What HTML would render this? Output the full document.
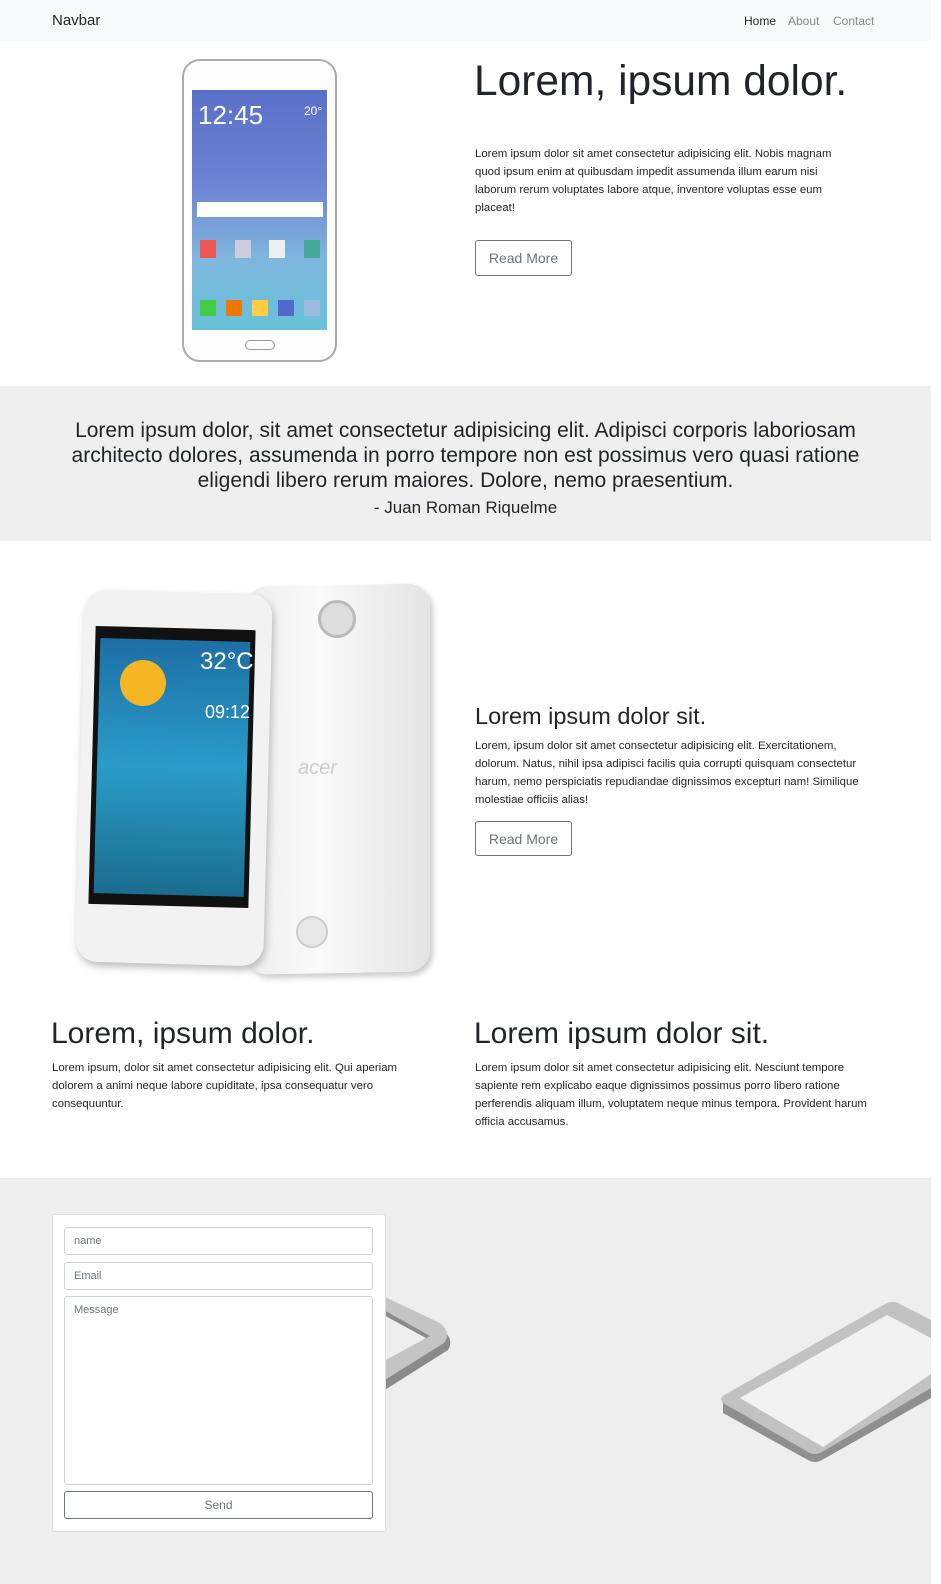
<!DOCTYPE html>
<html><head><meta charset="utf-8">
<style>
*{box-sizing:border-box;margin:0;padding:0}
body{width:941px;height:1584px;background:#fff;font-family:"Liberation Sans",sans-serif;color:#212529;position:relative;overflow:hidden}
.abs{position:absolute}
.nav{left:0;top:0;width:931px;height:41px;background:#f8f9fa}
.p{font-size:11.4px;line-height:18px;color:#212529}
.btn{border:1px solid #6c757d;border-radius:3px;color:#6c757d;font-size:14px;display:flex;align-items:center;justify-content:center;background:#fff}
.inp{border:1px solid #ced4da;border-radius:3px;background:#fff;font-size:11px;color:#6c757d;padding:7px 9px}
</style></head><body>
<div class="abs nav"></div>
<div class="abs" style="left:52px;top:12px;font-size:15px">Navbar</div>
<div class="abs" style="left:744px;top:14px;font-size:12px">Home</div>
<div class="abs" style="left:788px;top:14px;font-size:12px;color:#888">About</div>
<div class="abs" style="left:833px;top:14px;font-size:12px;color:#888">Contact</div>

<!-- samsung phone -->
<div class="abs" style="left:182px;top:59px;width:155px;height:303px;border:2px solid #aaa;border-radius:18px;background:#fdfdfd"></div>
<div class="abs" style="left:192px;top:90px;width:135px;height:240px;background:linear-gradient(180deg,#5a6fc8 0%,#6d84d4 40%,#7fb6de 70%,#66c2d9 100%)"></div>
<div class="abs" style="left:198px;top:100px;font-size:26px;color:#fff;font-weight:300">12:45</div>
<div class="abs" style="left:304px;top:104px;font-size:12px;color:#fff">20°</div>
<div class="abs" style="left:197px;top:202px;width:126px;height:15px;background:#fff"></div>
<div class="abs" style="left:245px;top:340px;width:30px;height:10px;border:1px solid #999;border-radius:5px"></div>
<div class="abs" style="left:200px;top:240px;width:120px;height:18px;display:flex;justify-content:space-between"><i style="width:16px;background:#e55"></i><i style="width:16px;background:#ccd"></i><i style="width:16px;background:#eee"></i><i style="width:16px;background:#4a9"></i></div>
<div class="abs" style="left:200px;top:300px;width:120px;height:16px;display:flex;justify-content:space-between"><i style="width:16px;background:#4c4"></i><i style="width:16px;background:#e70"></i><i style="width:16px;background:#fc4"></i><i style="width:16px;background:#56c"></i><i style="width:16px;background:#9bd"></i></div>

<div class="abs" style="left:474px;top:58px;font-size:42.5px;font-weight:300">Lorem, ipsum dolor.</div>
<div class="abs p" style="left:475px;top:145px;width:380px">Lorem ipsum dolor sit amet consectetur adipisicing elit. Nobis magnam quod ipsum enim at quibusdam impedit assumenda illum earum nisi laborum rerum voluptates labore atque, inventore voluptas esse eum placeat!</div>
<div class="abs btn" style="left:475px;top:240px;width:97px;height:36px">Read More</div>

<div class="abs" style="left:0;top:386px;width:931px;height:155px;background:#efefef"></div>
<div class="abs" style="left:55px;top:418px;width:821px;text-align:center;font-size:21px;line-height:25px">Lorem ipsum dolor, sit amet consectetur adipisicing elit. Adipisci corporis laboriosam architecto dolores, assumenda in porro tempore non est possimus vero quasi ratione eligendi libero rerum maiores. Dolore, nemo praesentium.</div>
<div class="abs" style="left:0;top:498px;width:931px;text-align:center;font-size:17px">- Juan Roman Riquelme</div>

<!-- acer phones -->
<div class="abs" style="left:245px;top:585px;width:185px;height:388px;border-radius:22px;background:linear-gradient(90deg,#eee,#fafafa 40%,#e4e4e4);box-shadow:3px 4px 6px #ccc;transform:skewY(-1deg)"></div>
<div class="abs" style="left:318px;top:600px;width:38px;height:38px;border-radius:50%;background:#ddd;border:3px solid #bbb"></div>
<div class="abs" style="left:296px;top:916px;width:32px;height:32px;border-radius:50%;background:#e8e8e8;border:2px solid #ccc"></div>
<div class="abs" style="left:298px;top:757px;font-size:20px;color:#ccc;font-style:italic">acer</div>
<div class="abs" style="left:80px;top:592px;width:188px;height:372px;border-radius:22px;background:#f2f2f2;box-shadow:2px 4px 8px #bbb;transform:rotate(1.5deg)"></div>
<div class="abs" style="left:92px;top:628px;width:160px;height:278px;background:#111;transform:rotate(1.5deg)"></div>
<div class="abs" style="left:97px;top:640px;width:150px;height:255px;background:linear-gradient(180deg,#1d6fa5,#2a9cc8 50%,#1a6d8f);transform:rotate(1.5deg)"></div>
<div class="abs" style="left:120px;top:660px;width:46px;height:46px;border-radius:50%;background:#f5b623"></div>
<div class="abs" style="left:200px;top:648px;font-size:24px;color:#fff">32°C</div>
<div class="abs" style="left:205px;top:702px;font-size:18px;color:#fff">09:12</div>

<div class="abs" style="left:475px;top:703px;font-size:23.5px;font-weight:300">Lorem ipsum dolor sit.</div>
<div class="abs p" style="left:475px;top:737px;width:405px">Lorem, ipsum dolor sit amet consectetur adipisicing elit. Exercitationem, dolorum. Natus, nihil ipsa adipisci facilis quia corrupti quisquam consectetur harum, nemo perspiciatis repudiandae dignissimos excepturi nam! Similique molestiae officiis alias!</div>
<div class="abs btn" style="left:475px;top:821px;width:97px;height:35px">Read More</div>

<div class="abs" style="left:51px;top:1017px;font-size:30px;font-weight:300">Lorem, ipsum dolor.</div>
<div class="abs p" style="left:52px;top:1059px;width:370px">Lorem ipsum, dolor sit amet consectetur adipisicing elit. Qui aperiam dolorem a animi neque labore cupiditate, ipsa consequatur vero consequuntur.</div>
<div class="abs" style="left:474px;top:1017px;font-size:30px;font-weight:300">Lorem ipsum dolor sit.</div>
<div class="abs p" style="left:475px;top:1059px;width:395px">Lorem ipsum dolor sit amet consectetur adipisicing elit. Nesciunt tempore sapiente rem explicabo eaque dignissimos possimus porro libero ratione perferendis aliquam illum, voluptatem neque minus tempora. Provident harum officia accusamus.</div>

<div class="abs" style="left:0;top:1178px;width:931px;height:406px;background:#eee"></div>
<svg class="abs" style="left:0;top:1178px" width="931" height="406">
<path d="M370 118 L440 150 Q455 160 448 172 L380 215 L380 200 L435 165 L380 135Z" fill="#8a8a8a"/>
<path d="M370 112 L440 145 Q452 155 444 165 L380 205 L380 185 L430 158 L380 130Z" fill="#c4c4c4"/>
<!-- right iso phone -->
<path d="M723 225 L723 235 L808 282 Q815 286 822 282 L931 220 L931 210 Z" fill="#8f8f8f"/>
<path d="M723 225 Q718 220 726 216 L885 126 Q893 122 900 126 L931 142 L931 210 L822 274 Q815 278 808 274 Z" fill="#c2c2c2"/>
<path d="M740 220 L887 137 L931 160 L931 196 L823 269 Z" fill="#f2f2f2"/>
</svg>

<div class="abs" style="left:52px;top:1214px;width:334px;height:318px;background:#fff;border:1px solid #ddd;border-radius:3px"></div>
<div class="abs inp" style="left:64px;top:1227px;width:309px;height:28px">name</div>
<div class="abs inp" style="left:64px;top:1262px;width:309px;height:28px">Email</div>
<div class="abs inp" style="left:64px;top:1296px;width:309px;height:189px">Message</div>
<div class="abs" style="left:64px;top:1491px;width:309px;height:28px;border:1px solid #6c757d;border-radius:3px;font-size:12px;color:#6c757d;display:flex;align-items:center;justify-content:center">Send</div>
</body></html>
